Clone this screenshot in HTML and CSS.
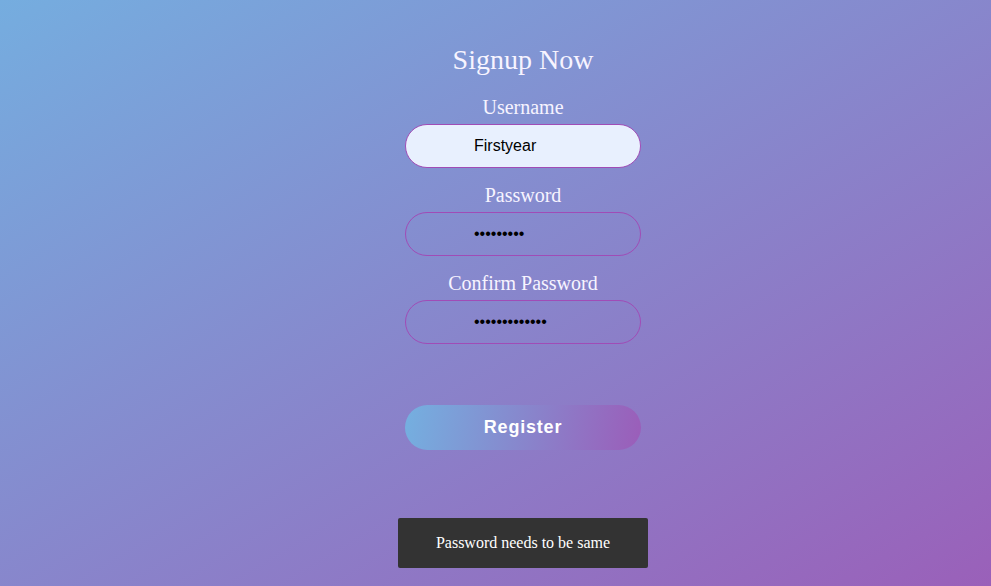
FILE: index.html
```html
<!DOCTYPE html>
<html lang="en">
<head>
<meta charset="utf-8">
<title>Signup</title>
<link rel="stylesheet" href="styles.css">
</head>
<body>
<main class="page">
  <form class="signup">
    <h2 class="title">Signup Now</h2>
    <label class="label" for="u">Username</label>
    <input class="field field-filled" id="u" type="text" value="Firstyear">
    <label class="label" for="p">Password</label>
    <input class="field" id="p" type="password" value="123456789">
    <label class="label" for="c">Confirm Password</label>
    <input class="field" id="c" type="password" value="1234567890123">
    <button class="register" type="button">Register</button>
  </form>
  <div class="toast">Password needs to be same</div>
</main>
</body>
</html>
```
FILE: styles.css
```css
html, body {
  margin: 0;
  padding: 0;
  height: 100%;
}
body {
  background: linear-gradient(to bottom right, #75addf, #9a60b9);
  font-family: "Liberation Serif", "Times New Roman", serif;
  color: #f7f4ff;
  overflow: hidden;
}
.page {
  display: flex;
  justify-content: center;
  padding-left: 55px;
}
.signup {
  width: 236px;
  display: flex;
  flex-direction: column;
  align-items: center;
  padding-top: 44px;
}
.title {
  margin: 0 0 20px;
  font-size: 28px;
  font-weight: normal;
  line-height: 32px;
}
.label {
  font-size: 20px;
  line-height: 23px;
  margin-bottom: 5px;
}
.field {
  box-sizing: border-box;
  width: 236px;
  height: 44px;
  border: 1px solid #a04cb6;
  border-radius: 22px;
  background: transparent;
  padding: 0 0 0 68px;
  margin: 0 0 16px;
  font-family: "Liberation Sans", Arial, sans-serif;
  font-size: 16px;
  color: #000;
  outline: none;
}
.field-filled {
  background: #e8f0fe;
}
.register {
  margin-top: 45px;
  width: 236px;
  height: 45px;
  border: none;
  border-radius: 23px;
  background: linear-gradient(100deg, #74b0e0, #9b5db9);
  color: #fff;
  font-family: "Liberation Sans", Arial, sans-serif;
  font-weight: bold;
  font-size: 18px;
  letter-spacing: 0.8px;
}
.toast {
  position: fixed;
  left: 398px;
  bottom: 18px;
  width: 250px;
  height: 50px;
  box-sizing: border-box;
  background: #333;
  border-radius: 2px;
  color: #fff;
  font-size: 16px;
  display: flex;
  align-items: center;
  justify-content: center;
}
```
